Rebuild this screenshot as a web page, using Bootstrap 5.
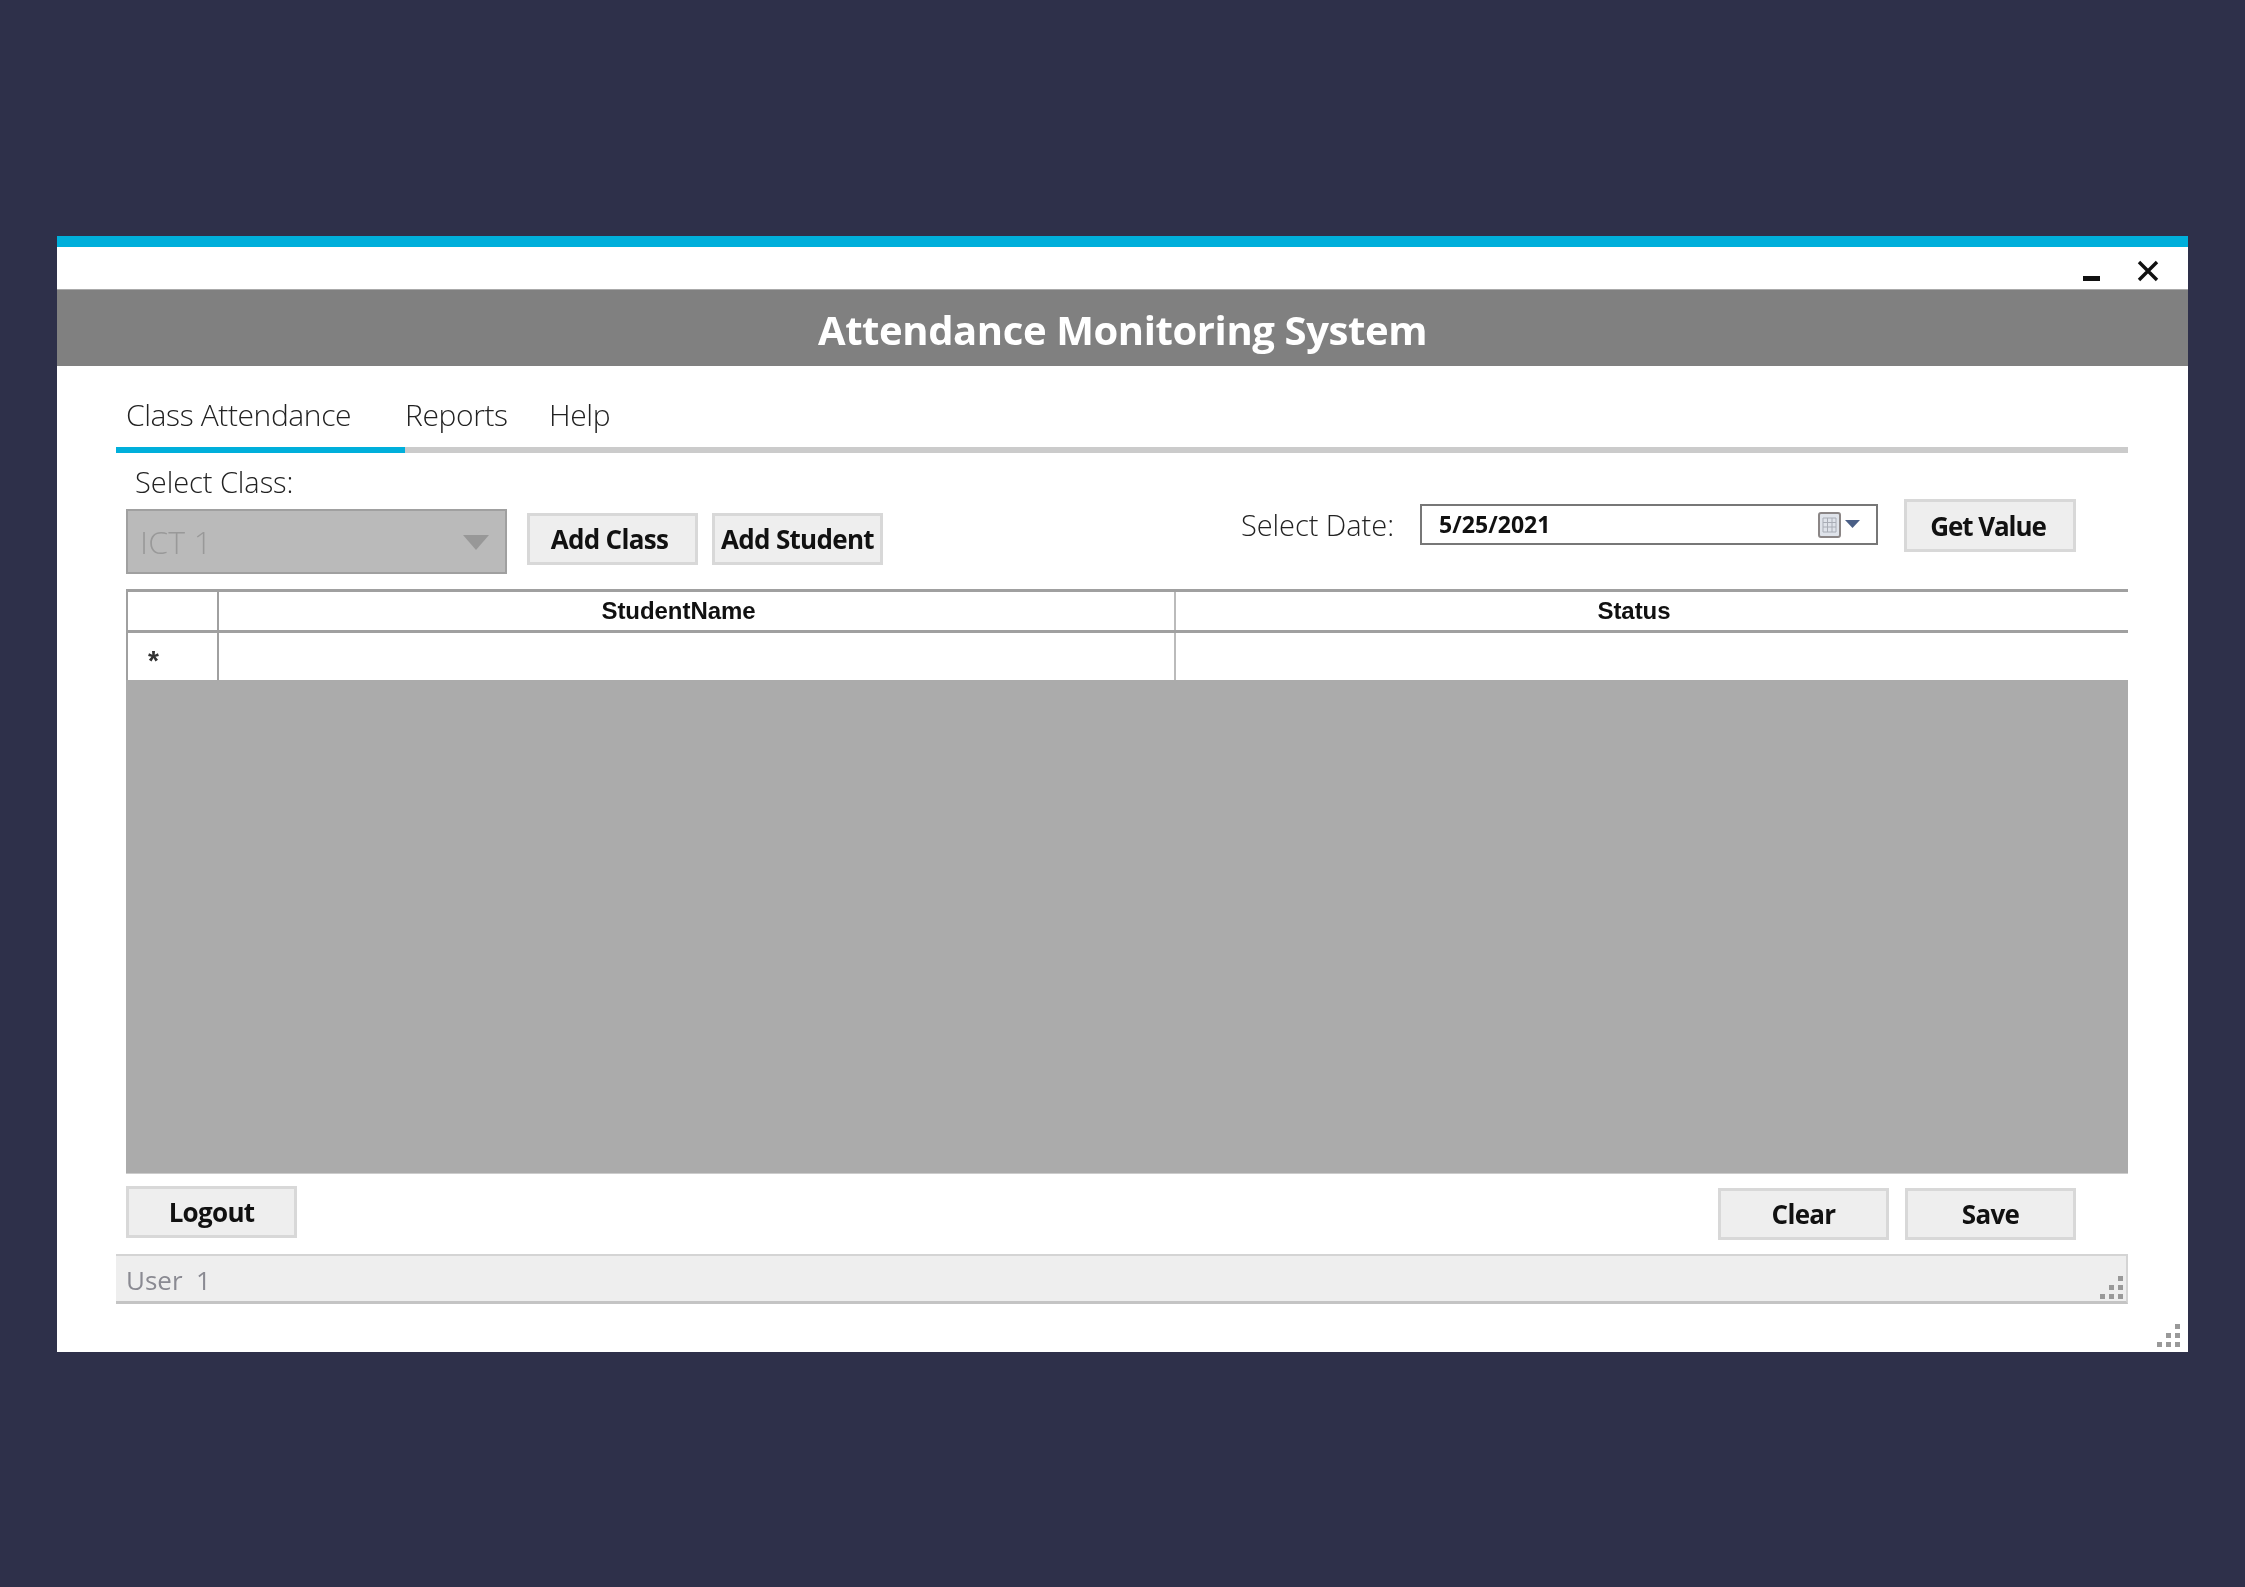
<!DOCTYPE html>
<html lang="en">
<head>
<meta charset="utf-8">
<title>Attendance Monitoring System</title>
<link href="https://cdn.jsdelivr.net/npm/bootstrap@5.3.0/dist/css/bootstrap.min.css" rel="stylesheet">
<style>
html,body{height:100%}
body{background:#2e304a;padding:236px 57px 0;font-family:"Open Sans","Noto Sans",sans-serif;color:#111;overflow:hidden}
.app-win{width:2131px;height:1116px;background:#fff;border-top:11px solid #00afdb;position:relative;filter:blur(.5px)}
.win-ctl{height:42px;padding:6px 29px 0 0;gap:37px}
.win-min{width:17px;height:5px;background:#111;margin-top:14px}
.win-title{height:77px;background:#808080;border-top:1px solid #aaa;color:#fff;font-size:40px;font-weight:700;letter-spacing:-.4px;padding-top:4px}
.app-body{padding:0 60px 0 59px}
.tab-strip{height:87px;border-bottom:6px solid #cbcbcb}
.tab-item{height:87px;margin-bottom:-6px;font-size:30px;font-weight:300;padding-top:28px;letter-spacing:-.4px;line-height:42px;color:#222}
.tab-on{width:289px;padding-left:10px;border-bottom:6px solid #00afdb}
.tab-two{width:144px}
.tools{height:136px;padding:0 52px 0 10px}
.sel-label{height:56px;font-size:29px;font-weight:300;letter-spacing:-.05px;padding:10px 0 0 9px;line-height:38px;color:#222}
.combo-box{width:381px;height:65px;background:#bababa;border:2px solid #a0a0a0;padding:0 16px 0 12px;font-size:32px;font-weight:300;color:#999;letter-spacing:.2px}
.win-btn{width:171px;height:52px;background:#eee;border:3px solid #d8d8d8;border-radius:0;font-size:26px;font-weight:700;letter-spacing:-.7px;color:#111;padding:0;line-height:1}
.win-btn:hover{background:#eee;border-color:#d8d8d8;color:#111}
.btn-first{margin-left:20px;margin-bottom:5px;padding-right:6px}
.btn-next{margin-left:14px;margin-bottom:5px}
.date-wrap{margin-top:46px;gap:26px}
.date-label{font-size:29px;font-weight:300;letter-spacing:-.05px;color:#222;margin-bottom:2px}
.date-box{width:458px;height:41px;border:2px solid #777;padding:0 16px 0 17px;font-size:23px;font-weight:700;letter-spacing:.05px;color:#111;margin-bottom:2px}
.btn-value{width:172px;height:53px;letter-spacing:-1.1px;padding-right:4px}
.grid-area{height:585px;margin-left:10px;background:#ababab;border-bottom:1px solid #ccc}
.grid-tbl{table-layout:fixed;border-collapse:collapse;width:100%;background:#fff}
.grid-tbl th,.grid-tbl td{padding:0;border:0 solid #a8a8a8}
.grid-tbl th{height:41px;border-top:3px solid #a0a0a0;border-bottom:3px solid #a0a0a0;text-align:center;font:700 24px/1 "Liberation Sans",sans-serif;letter-spacing:-.05px;color:#111;padding-right:36px}
.grid-tbl th.c-head{padding-right:0}
.grid-tbl td{height:48px}
.grid-tbl .c-head{width:91px;border-left:2px solid #a0a0a0;border-right:2px solid #a0a0a0}
.grid-tbl .c-name{width:957px;border-right:2px solid #bbb}
.star-cell{font:700 28px/1 "Liberation Sans",sans-serif;padding:10px 0 0 20px!important;color:#333}
.foot-row{height:80px;padding:0 52px 0 10px}
.btn-logout{margin-top:12px}
.btn-right{margin-top:14px}
.stat-bar{height:50px;background:#eee;border-top:2px solid #d4d4d4;border-bottom:3px solid #c4c4c4;border-right:2px solid #d4d4d4;padding:4px 0 0 10px;font-size:26px;font-weight:400;color:#8a8a92;position:relative}
.grip-dots{position:absolute;right:2px;bottom:2px;width:26px;height:26px}
.grip-win{right:7px;bottom:5px}
</style>
</head>
<body>
<div class="app-win">
  <div class="win-ctl d-flex justify-content-end align-items-center">
    <span class="win-min"></span>
    <svg width="22" height="22" viewBox="0 0 22 22" aria-label="Close"><path d="M2 2 20 20M20 2 2 20" stroke="#111" stroke-width="3.4" fill="none"/></svg>
  </div>
  <div class="win-title d-flex align-items-center justify-content-center">Attendance Monitoring System</div>
  <div class="app-body">
    <nav class="tab-strip d-flex">
      <div class="tab-item tab-on">Class Attendance</div>
      <div class="tab-item tab-two">Reports</div>
      <div class="tab-item">Help</div>
    </nav>
    <div class="tools d-flex justify-content-between">
      <div>
        <div class="sel-label">Select Class:</div>
        <div class="d-flex align-items-center">
          <div class="combo-box d-flex align-items-center justify-content-between">
            <span>ICT 1</span>
            <svg width="26" height="18" viewBox="0 0 26 18"><path d="M0 2h26L13 17z" fill="#989898"/></svg>
          </div>
          <button class="btn win-btn btn-first" type="button">Add Class</button>
          <button class="btn win-btn btn-next" type="button">Add Student</button>
        </div>
      </div>
      <div class="d-flex align-items-center align-self-start date-wrap">
        <span class="date-label">Select Date:</span>
        <div class="date-box d-flex align-items-center justify-content-between">
          <span>5/25/2021</span>
          <svg width="42" height="26" viewBox="0 0 42 26">
            <rect x="1" y="1" width="21" height="24" rx="2" fill="#dfe3ea" stroke="#8b8686" stroke-width="2"/>
            <path d="M5 6h13v14H5zM5 10.500h13M5 15h13M9.500 6v14M14 6v14" fill="none" stroke="#a9adb6" stroke-width="1"/>
            <path d="M27 8h15l-7.500 8z" fill="#4a5f86"/>
          </svg>
        </div>
        <button class="btn win-btn btn-value" type="button">Get Value</button>
      </div>
    </div>
    <div class="grid-area">
      <table class="grid-tbl">
        <thead><tr><th class="c-head"></th><th class="c-name">StudentName</th><th>Status</th></tr></thead>
        <tbody><tr><td class="c-head star-cell">*</td><td class="c-name"></td><td></td></tr></tbody>
      </table>
    </div>
    <div class="foot-row d-flex justify-content-between">
      <button class="btn win-btn btn-logout" type="button">Logout</button>
      <div class="d-flex gap-3 align-items-start">
        <button class="btn win-btn btn-right" type="button">Clear</button>
        <button class="btn win-btn btn-right" type="button">Save</button>
      </div>
    </div>
    <div class="stat-bar d-flex align-items-center">User&nbsp;&nbsp;1
      <svg class="grip-dots" viewBox="0 0 26 26"><g fill="#999"><rect x="20" y="3" width="5" height="5"/><rect x="11" y="12" width="5" height="5"/><rect x="20" y="12" width="5" height="5"/><rect x="2" y="21" width="5" height="5"/><rect x="11" y="21" width="5" height="5"/><rect x="20" y="21" width="5" height="5"/></g></svg>
    </div>
  </div>
  <svg class="grip-dots grip-win" viewBox="0 0 26 26"><g fill="#999"><rect x="20" y="3" width="5" height="5"/><rect x="11" y="12" width="5" height="5"/><rect x="20" y="12" width="5" height="5"/><rect x="2" y="21" width="5" height="5"/><rect x="11" y="21" width="5" height="5"/><rect x="20" y="21" width="5" height="5"/></g></svg>
</div>
<script src="https://cdn.jsdelivr.net/npm/bootstrap@5.3.0/dist/js/bootstrap.bundle.min.js"></script>
</body>
</html>
